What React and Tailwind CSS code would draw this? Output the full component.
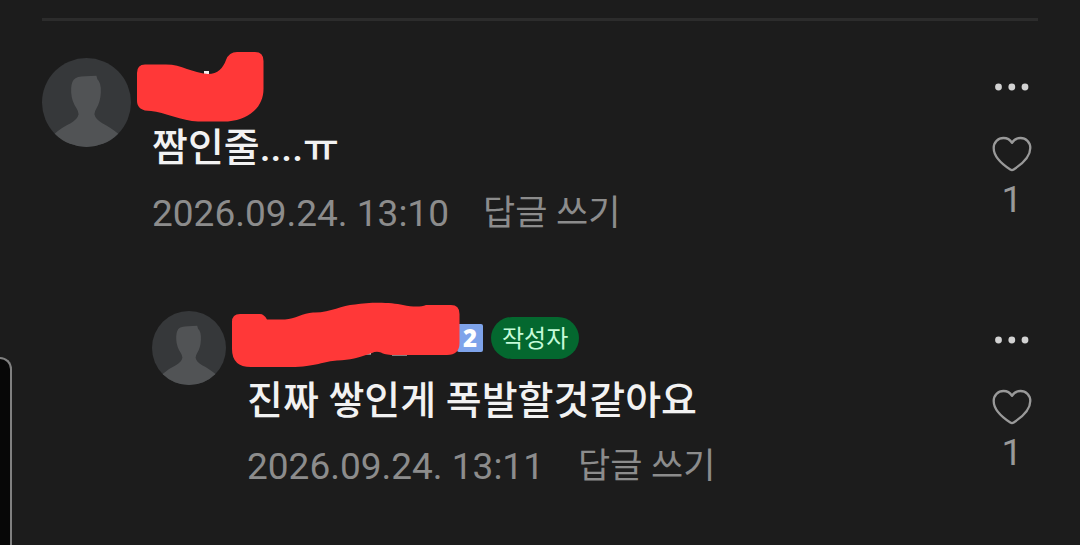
import React, { useState } from 'react';
import clsx from 'clsx';

const comments = [
  {
    id: 1,
    text: '짬인줄....ㅠ',
    date: '2026.09.24. 13:10',
    likes: 1,
    isReply: false,
    isAuthor: false
  },
  {
    id: 2,
    text: '진짜 쌓인게 폭발할것같아요',
    date: '2026.09.24. 13:11',
    likes: 1,
    isReply: true,
    isAuthor: true,
    level: 2
  }
];

const Avatar = ({ className }) => (
  <svg viewBox="0 0 90 90" className={className} aria-hidden="true">
    <defs>
      <clipPath id="avatar-circle">
        <circle cx="45" cy="45" r="45" />
      </clipPath>
    </defs>
    <g clipPath="url(#avatar-circle)">
      <rect width="90" height="90" fill="#36383a" />
      <path
        d="M32 22Q35 18.500 44 18.500L55 18L56 21.500Q60 25 59.500 35Q59 45 55 51Q53 54 53 57Q54 62 61 66Q69 70 79 78V90H11V78Q20 70 29 66Q36 62 37 57Q37 54 35 51Q30 44 29.500 35Q29 26 32 22Z"
        fill="#515355"
      />
    </g>
  </svg>
);

// Marker strokes that hide the nicknames
const ShortMask = () => (
  <svg width="130" height="74" viewBox="0 0 130 74" className="relative shrink-0" aria-hidden="true">
    <rect x="68" y="23" width="5" height="4" fill="#f0f0f0" />
    <path
      d="M1 25Q1 16.500 9 16.500H30C46 16.500 56 25 72 26C82 26 87 20 90 12Q93 4 101 4H119Q127.500 4 127.500 13V41C127.500 58 115 71 92 73.500H62C46 73 28 64 15 63Q1 63 1 53Z"
      fill="#ff3838"
    />
  </svg>
);

const LongMask = () => (
  <svg width="230" height="76" viewBox="0 0 230 76" className="relative shrink-0" aria-hidden="true">
    <path d="M134 53.500H140M161 54.500H176" stroke="#e4e4e4" strokeWidth="2" />
    <path
      d="M1 22Q1 14 9 14H29Q33 14 36 19.500H54C64 19 72 13 82 12.500C100 13 110 5 124 4.500C138 2 160 2 172 5C182 7 190 7 195 5H220Q228.500 5 228.500 14V43Q228.500 55 216 55H160Q152 54 150 52.500Q145 51 141 53C126 58 120 60 106 60.500C94 61 84 67 60 67H20Q1 67 1 49Z"
      fill="#ff3838"
    />
  </svg>
);

const Dots = () => (
  <svg width="36" height="8" viewBox="0 0 36 8" fill="#d2d2d2" aria-hidden="true">
    <circle cx="4.500" cy="4" r="3.400" />
    <circle cx="17.800" cy="4" r="3.400" />
    <circle cx="31" cy="4" r="3.400" />
  </svg>
);

const HeartIcon = () => (
  <svg width="40" height="36" viewBox="0 0 40 36" fill="none" stroke="#999" strokeWidth="2.300" strokeLinejoin="round" aria-hidden="true">
    <path d="M20 6.800C18 3.500 15 2 11.500 2C6 2 1.700 6.200 1.700 12C1.700 20 9 27.500 18.300 33.500Q20 34.600 21.700 33.500C31 27.500 38.300 20 38.300 12C38.300 6.200 34 2 28.500 2C25 2 22 3.500 20 6.800Z" />
  </svg>
);

const Comment = ({ comment }) => {
  const [liked, setLiked] = useState(false);

  return (
    <li className={clsx('flex items-start', comment.isReply && 'pl-[110px]')}>
      <Avatar className={clsx('mr-[21px] shrink-0', comment.isReply ? 'size-[74px]' : 'size-[89px]')} />

      <div className="min-w-0 flex-1">
        {/* Nickname */}
        <div className="-ml-4 flex h-[54px] items-center">
          {comment.isReply ? <LongMask /> : <ShortMask />}
          {comment.level && (
            <span className="-ml-1 flex h-7 w-[26px] items-center justify-center rounded-xs bg-[#7ea3ea] font-['Open_Sans',sans-serif] text-2xl leading-7 font-extrabold text-white">
              {comment.level}
            </span>
          )}
          {comment.isAuthor && (
            <span className="ml-2 rounded-full bg-[#04682f] px-[11px] pt-[2px] text-2xl leading-10 text-[#c4fbd9]">
              작성자
            </span>
          )}
        </div>

        <p className="mt-[10px] text-[39px] leading-[52px] font-medium text-[#f2f2f2]">{comment.text}</p>

        <div className="mt-[18px] flex items-center gap-[34px] leading-[44px] text-[#8c8c8c]">
          <time className="text-[37px]">{comment.date}</time>
          <button type="button" className="text-[35px]">답글 쓰기</button>
        </div>
      </div>

      {/* Actions */}
      <div className="flex w-[52px] shrink-0 flex-col items-center">
        <button type="button" aria-label="더보기" className="flex h-[58px] items-center">
          <Dots />
        </button>
        <button
          type="button"
          aria-pressed={liked}
          onClick={() => setLiked(!liked)}
          className="mt-5 flex flex-col items-center gap-[6px] text-[37px] leading-[44px] text-[#999]"
        >
          <HeartIcon />
          {comment.likes + (liked ? 1 : 0)}
        </button>
      </div>
    </li>
  );
};

export default function App() {
  return (
    <main className="relative min-h-screen overflow-hidden bg-[#1c1c1c] px-[42px] pt-[18px] font-[Roboto,'Noto_Sans_CJK_KR',sans-serif]">
      <hr className="border-t-3 border-[#2c2c2c]" />
      <ul className="flex flex-col gap-[75px] pt-[37px]">
        {comments.map((comment) => (
          <Comment key={comment.id} comment={comment} />
        ))}
      </ul>

      {/* Edge panel handle */}
      <div className="absolute bottom-0 left-0 h-[188px] w-3 rounded-tr-xl border-t-2 border-r-2 border-[#808080] bg-[#070707]" />
    </main>
  );
}
